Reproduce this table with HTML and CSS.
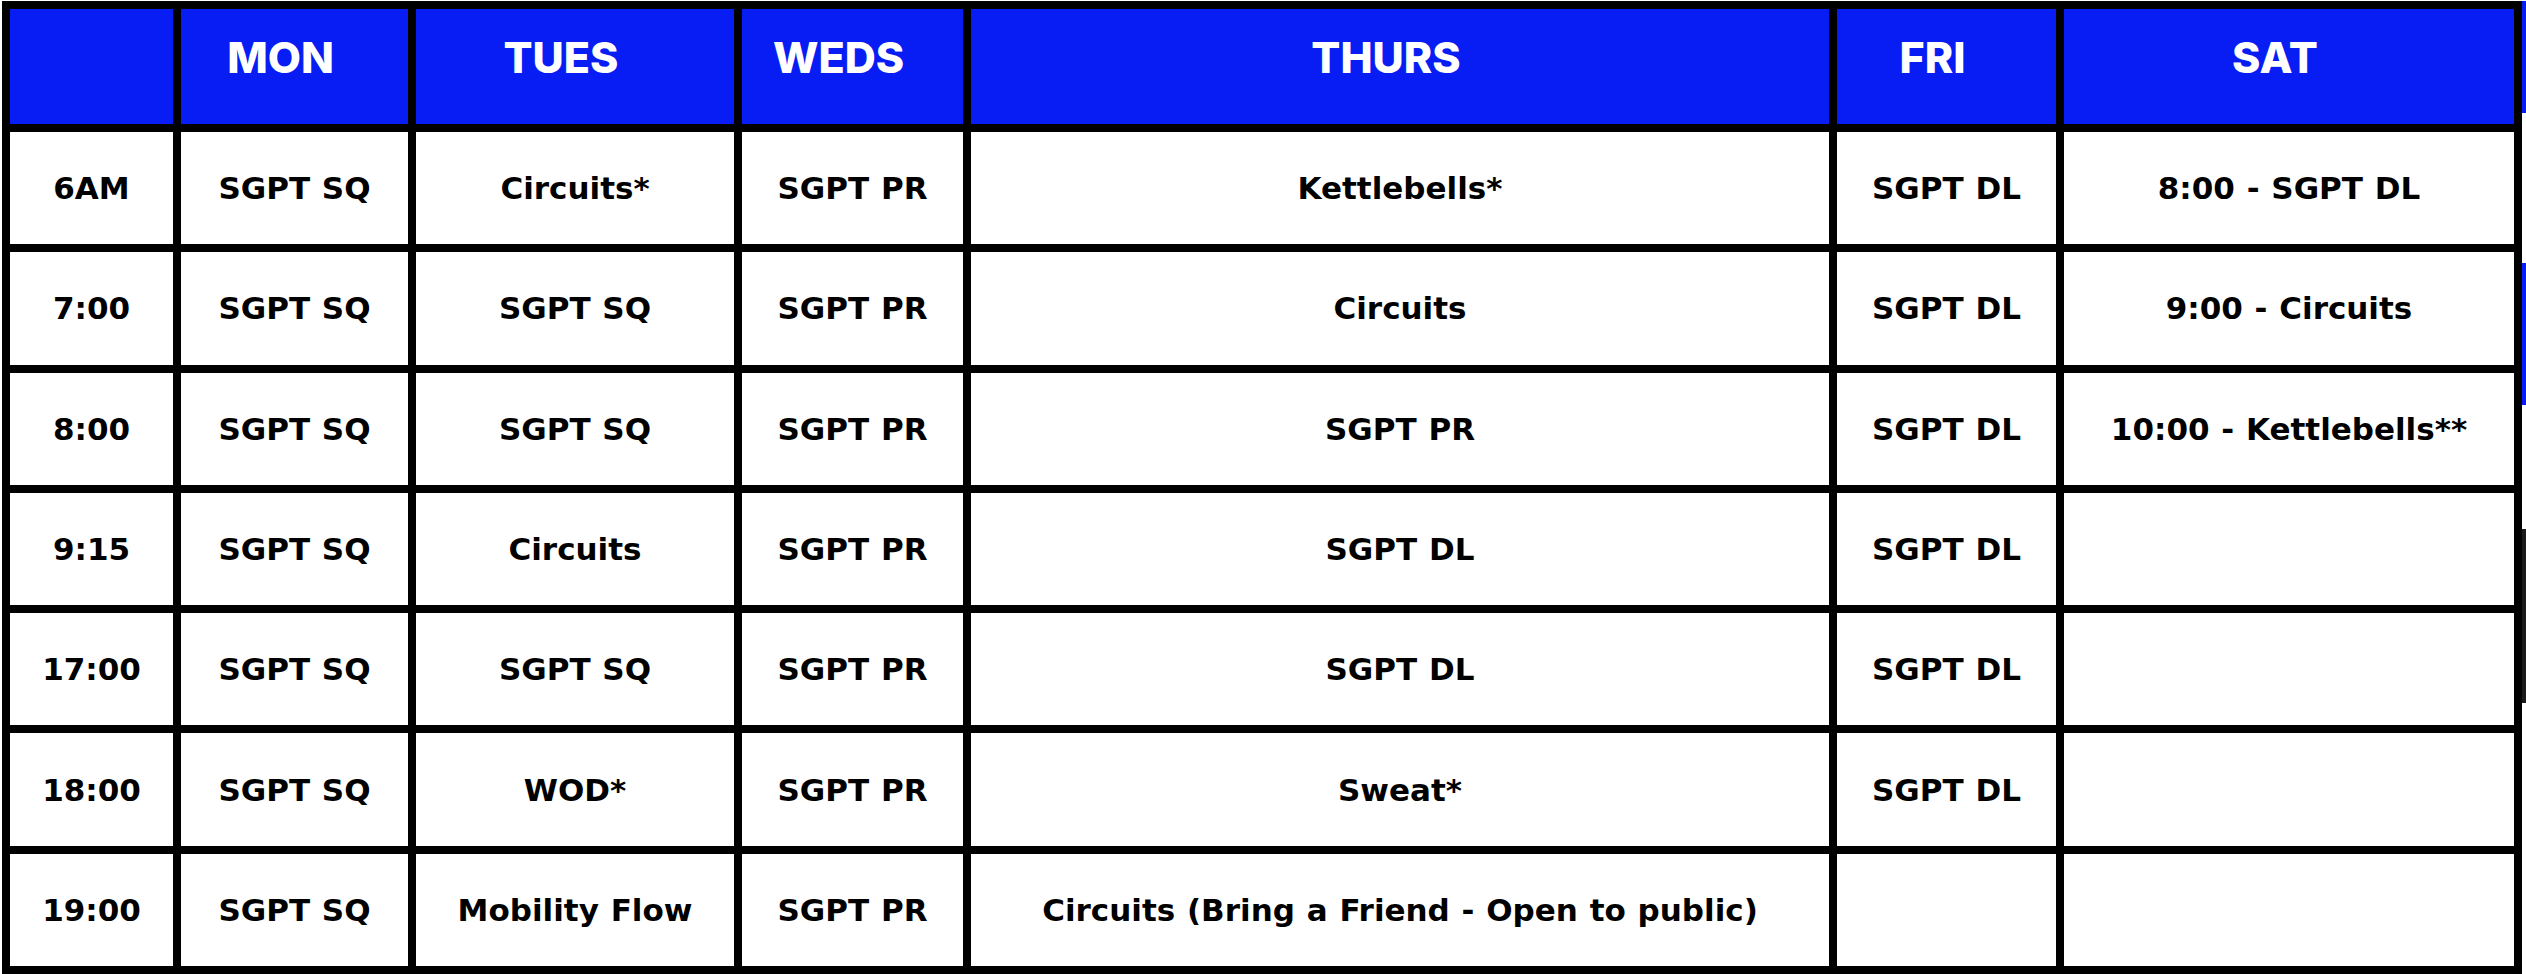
FILE: index.html
```html
<!DOCTYPE html>
<html lang="en">
<head>
<meta charset="utf-8">
<title>Class Timetable</title>
<link rel="stylesheet" href="styles.css">
</head>
<body>
<div class="page">
<div class="timetable">
  <div class="head"></div>
  <div class="head">MON</div>
  <div class="head">TUES</div>
  <div class="head">WEDS</div>
  <div class="head">THURS</div>
  <div class="head">FRI</div>
  <div class="head">SAT</div>

  <div class="cell">6AM</div>
  <div class="cell">SGPT SQ</div>
  <div class="cell">Circuits*</div>
  <div class="cell">SGPT PR</div>
  <div class="cell">Kettlebells*</div>
  <div class="cell">SGPT DL</div>
  <div class="cell">8:00 - SGPT DL</div>

  <div class="cell">7:00</div>
  <div class="cell">SGPT SQ</div>
  <div class="cell">SGPT SQ</div>
  <div class="cell">SGPT PR</div>
  <div class="cell">Circuits</div>
  <div class="cell">SGPT DL</div>
  <div class="cell">9:00 - Circuits</div>

  <div class="cell">8:00</div>
  <div class="cell">SGPT SQ</div>
  <div class="cell">SGPT SQ</div>
  <div class="cell">SGPT PR</div>
  <div class="cell">SGPT PR</div>
  <div class="cell">SGPT DL</div>
  <div class="cell">10:00 - Kettlebells**</div>

  <div class="cell">9:15</div>
  <div class="cell">SGPT SQ</div>
  <div class="cell">Circuits</div>
  <div class="cell">SGPT PR</div>
  <div class="cell">SGPT DL</div>
  <div class="cell">SGPT DL</div>
  <div class="cell"></div>

  <div class="cell">17:00</div>
  <div class="cell">SGPT SQ</div>
  <div class="cell">SGPT SQ</div>
  <div class="cell">SGPT PR</div>
  <div class="cell">SGPT DL</div>
  <div class="cell">SGPT DL</div>
  <div class="cell"></div>

  <div class="cell">18:00</div>
  <div class="cell">SGPT SQ</div>
  <div class="cell">WOD*</div>
  <div class="cell">SGPT PR</div>
  <div class="cell">Sweat*</div>
  <div class="cell">SGPT DL</div>
  <div class="cell"></div>

  <div class="cell">19:00</div>
  <div class="cell">SGPT SQ</div>
  <div class="cell">Mobility Flow</div>
  <div class="cell">SGPT PR</div>
  <div class="cell">Circuits (Bring a Friend - Open to public)</div>
  <div class="cell"></div>
  <div class="cell"></div>
</div>
<div class="edge">
  <div class="edge-bit blue b1"></div>
  <div class="edge-bit blue b2"></div>
  <div class="edge-bit dark b3"></div>
</div>
</div>
</body>
</html>
```

FILE: styles.css
```css
html, body {
  margin: 0;
  padding: 0;
  background: #ffffff;
}

body {
  font-family: "Inter", "Noto Sans", "DejaVu Sans", sans-serif;
  overflow: hidden;
}

.page {
  position: relative;
  width: 2526px;
  height: 974px;
}

.timetable {
  box-sizing: border-box;
  margin: 1px 0 0 2px;
  width: 2520px;
  height: 973px;
  padding: 8px;
  gap: 8px;
  background: #000000;
  display: grid;
  grid-template-columns: 163px 227px 318px 221px 858px 219px 450px;
  grid-template-rows: 115px repeat(7, 1fr);
}

.head {
  background: #081cf4;
  color: #ffffff;
  font-family: "Inter", "Noto Sans", sans-serif;
  font-weight: 800;
  font-size: 43px;
  display: flex;
  align-items: center;
  justify-content: center;
  padding: 0 28px 20px 0;
}

.cell {
  background: #ffffff;
  color: #000000;
  font-family: "DejaVu Sans", "Inter", sans-serif;
  font-weight: 700;
  font-size: 31px;
  letter-spacing: 0;
  word-spacing: 1px;
  display: flex;
  align-items: center;
  justify-content: center;
  text-align: center;
  white-space: nowrap;
}

.edge {
  position: absolute;
  left: 2522px;
  top: 0;
  width: 4px;
  height: 974px;
}

.edge-bit {
  position: absolute;
  left: 0;
  width: 4px;
}

.blue { background: #081cf4; }
.dark { background: #1a1a1a; }

.b1 { top: 0; height: 112px; }
.b2 { top: 262px; height: 142px; }
.b3 { top: 528px; height: 174px; }
```
